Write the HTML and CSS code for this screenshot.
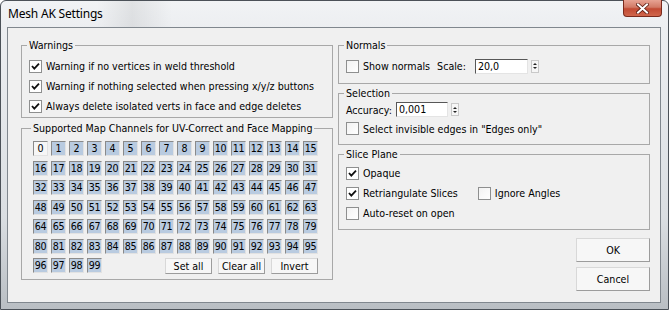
FILE: index.html
```html
<!DOCTYPE html>
<html lang="en">
<head>
    <meta charset="UTF-8">
    <title>Mesh AK Settings</title>
    <link rel="stylesheet" href="styles.css">
</head>
<body>
<div class="window">
  <div class="titlebar">
    <span class="title">Mesh AK Settings</span>
    <span class="close">
      <svg width="13" height="11" viewBox="0 0 13 11">
        <path d="M2 1.5 L11 9.5 M11 1.5 L2 9.5" stroke="#5a1a10" stroke-width="3.6" stroke-linecap="square"/>
        <path d="M2 1.5 L11 9.5 M11 1.5 L2 9.5" stroke="#fff" stroke-width="2" stroke-linecap="square"/>
      </svg>
    </span>
  </div>

  <div class="client">
    <div class="col">
      <fieldset class="group warnings">
        <legend>Warnings</legend>
        <div class="row"><span class="cb on"></span>Warning if no vertices in weld threshold</div>
        <div class="row"><span class="cb on"></span>Warning if nothing selected when pressing x/y/z buttons</div>
        <div class="row"><span class="cb on"></span>Always delete isolated verts in face and edge deletes</div>
      </fieldset>

      <fieldset class="group channels">
        <legend>Supported Map Channels for UV-Correct and Face Mapping</legend>
        <div class="grid">
          <span class="ch">0</span><span class="ch on">1</span><span class="ch on">2</span><span class="ch on">3</span>
          <span class="ch on">4</span><span class="ch on">5</span><span class="ch on">6</span><span class="ch on">7</span>
          <span class="ch on">8</span><span class="ch on">9</span><span class="ch on">10</span><span class="ch on">11</span>
          <span class="ch on">12</span><span class="ch on">13</span><span class="ch on">14</span><span class="ch on">15</span>
          <span class="ch on">16</span><span class="ch on">17</span><span class="ch on">18</span><span class="ch on">19</span>
          <span class="ch on">20</span><span class="ch on">21</span><span class="ch on">22</span><span class="ch on">23</span>
          <span class="ch on">24</span><span class="ch on">25</span><span class="ch on">26</span><span class="ch on">27</span>
          <span class="ch on">28</span><span class="ch on">29</span><span class="ch on">30</span><span class="ch on">31</span>
          <span class="ch on">32</span><span class="ch on">33</span><span class="ch on">34</span><span class="ch on">35</span>
          <span class="ch on">36</span><span class="ch on">37</span><span class="ch on">38</span><span class="ch on">39</span>
          <span class="ch on">40</span><span class="ch on">41</span><span class="ch on">42</span><span class="ch on">43</span>
          <span class="ch on">44</span><span class="ch on">45</span><span class="ch on">46</span><span class="ch on">47</span>
          <span class="ch on">48</span><span class="ch on">49</span><span class="ch on">50</span><span class="ch on">51</span>
          <span class="ch on">52</span><span class="ch on">53</span><span class="ch on">54</span><span class="ch on">55</span>
          <span class="ch on">56</span><span class="ch on">57</span><span class="ch on">58</span><span class="ch on">59</span>
          <span class="ch on">60</span><span class="ch on">61</span><span class="ch on">62</span><span class="ch on">63</span>
          <span class="ch on">64</span><span class="ch on">65</span><span class="ch on">66</span><span class="ch on">67</span>
          <span class="ch on">68</span><span class="ch on">69</span><span class="ch on">70</span><span class="ch on">71</span>
          <span class="ch on">72</span><span class="ch on">73</span><span class="ch on">74</span><span class="ch on">75</span>
          <span class="ch on">76</span><span class="ch on">77</span><span class="ch on">78</span><span class="ch on">79</span>
          <span class="ch on">80</span><span class="ch on">81</span><span class="ch on">82</span><span class="ch on">83</span>
          <span class="ch on">84</span><span class="ch on">85</span><span class="ch on">86</span><span class="ch on">87</span>
          <span class="ch on">88</span><span class="ch on">89</span><span class="ch on">90</span><span class="ch on">91</span>
          <span class="ch on">92</span><span class="ch on">93</span><span class="ch on">94</span><span class="ch on">95</span>
          <span class="ch on">96</span><span class="ch on">97</span><span class="ch on">98</span><span class="ch on">99</span>
          <div class="tools">
            <button class="btn small">Set all</button>
            <button class="btn small">Clear all</button>
            <button class="btn small">Invert</button>
          </div>
        </div>
      </fieldset>
    </div>

    <div class="col">
      <fieldset class="group normals">
        <legend>Normals</legend>
        <div class="row">
          <span class="cb"></span>Show normals
          <span class="lbl-scale">Scale:</span>
          <span class="num scale">20,0</span><span class="spin"><i class="up"></i><i class="dn"></i></span>
        </div>
      </fieldset>

      <fieldset class="group selection">
        <legend>Selection</legend>
        <div class="row tight">
          Accuracy:
          <span class="num acc">0,001</span><span class="spin"><i class="up"></i><i class="dn"></i></span>
        </div>
        <div class="row tight"><span class="cb"></span>Select invisible edges in "Edges only"</div>
      </fieldset>

      <fieldset class="group slice">
        <legend>Slice Plane</legend>
        <div class="row"><span class="cb on"></span>Opaque</div>
        <div class="row"><span class="cb on"></span><span class="retri">Retriangulate Slices</span><span class="cb"></span>Ignore Angles</div>
        <div class="row"><span class="cb"></span>Auto-reset on open</div>
      </fieldset>

      <div class="actions">
        <button class="btn big">OK</button>
        <button class="btn big">Cancel</button>
      </div>
    </div>
  </div>
</div>
</body>
</html>
```

FILE: styles.css
```css
body {
    margin: 0;
    font-family: "DejaVu Sans Condensed", "DejaVu Sans", sans-serif;
    font-stretch: condensed;
    font-size: 10.6px;
    color: #000;
    background: #fff;
}

.window {
    width: 669px;
    height: 310px;
    box-sizing: border-box;
    padding: 0 7px 6px 6px;
    border: 1px solid #4b5158;
    border-radius: 6px 6px 0 0;
    background: linear-gradient(to bottom, #f1f3f5 0, #eceef1 28px, #dadee2 70%, #b9bec3 100%);
    display: flex;
    flex-direction: column;
}

.titlebar {
    height: 26px;
    display: flex;
    align-items: flex-start;
    background: linear-gradient(to right, rgba(0,0,0,0) 90px, rgba(0,0,0,0.07) 125px, rgba(0,0,0,0) 165px);
}

.title {
    font-family: "Noto Sans", "Open Sans", sans-serif;
    font-stretch: normal;
    font-size: 12px;
    line-height: 26px;
    padding-left: 1px;
    letter-spacing: -0.2px;
    color: #000;
}

.close {
    margin: -1px -1px 0 auto;
    width: 39px;
    height: 17px;
    box-sizing: border-box;
    border: 1px solid #7a2a1c;
    border-top: none;
    border-radius: 0 0 4px 4px;
    background: linear-gradient(to bottom, #e7a393 0, #d27a66 45%, #c24a33 55%, #d0664c 100%);
    display: flex;
    align-items: center;
    justify-content: center;
}

.client {
    flex: 1;
    border: 1px solid #80878e;
    background: #f0f0f0;
    display: flex;
    gap: 5px;
    padding: 10px 10px 0 13px;
}

.col {
    width: 312px;
    display: flex;
    flex-direction: column;
}

.group {
    margin: 0;
    min-width: 0;
    border: 1px solid #a8a8a8;
    padding: 0 0 0 7px;
}

.group legend {
    padding: 0 2px;
    margin-left: -2px;
    line-height: 14px;
}

.row {
    height: 20px;
    display: flex;
    align-items: center;
    white-space: nowrap;
}

.row.tight {
    height: 19px;
}

.cb {
    width: 13px;
    height: 13px;
    box-sizing: border-box;
    border: 1px solid #8e8f8f;
    background: linear-gradient(135deg, #f2f2f2, #ffffff);
    margin-right: 4px;
    flex: none;
}

.cb.on {
    background: #fff url("data:image/svg+xml,%3Csvg xmlns='http://www.w3.org/2000/svg' width='11' height='11'%3E%3Cpath d='M2 5 L4.3 7.6 L9 2.6' fill='none' stroke='%23111' stroke-width='1.8'/%3E%3C/svg%3E") no-repeat center;
}

/* warnings */
.warnings {
    padding-top: 4px;
    padding-bottom: 1px;
}

/* map channels */
.channels {
    margin-top: 3px;
    padding: 6px 0 6px 11px;
}

.grid {
    display: grid;
    grid-template-columns: repeat(16, 15px);
    grid-auto-rows: 15px;
    column-gap: 3px;
    row-gap: 4.5px;
}

.ch {
    box-sizing: border-box;
    border: 1px solid;
    border-color: #8a8a8a #e2e2e2 #e2e2e2 #8a8a8a;
    background: #f6f6f6;
    text-align: center;
    line-height: 13px;
    letter-spacing: -0.3px;
}

.ch.on {
    background: #b9cbe0;
}

.tools {
    grid-column: 5 / 17;
    display: flex;
    justify-content: flex-end;
    align-items: center;
    gap: 6px;
}

.btn {
    font: inherit;
    color: #000;
    padding: 0;
    box-sizing: border-box;
    border: 1px solid;
    border-color: #d8d8d8 #9c9c9c #9c9c9c #d8d8d8;
    background: #f7f7f7;
}

.btn.small {
    width: 47px;
    height: 16px;
    line-height: 14px;
}

.btn.big {
    width: 74px;
    height: 24px;
}

/* normals */
.normals {
    padding-top: 4px;
    padding-bottom: 7px;
}

.lbl-scale {
    margin-left: 7px;
    margin-right: 9px;
}

.num {
    height: 15px;
    box-sizing: border-box;
    border: 1px solid;
    border-color: #575757 #e4e4e4 #e4e4e4 #575757;
    background: #fff;
    padding-left: 2px;
    line-height: 13px;
}

.num.scale {
    width: 53px;
}

.num.acc {
    width: 52px;
    margin-left: 4px;
}

.spin {
    width: 8px;
    height: 13px;
    box-sizing: border-box;
    border: 1px solid #c9c9c9;
    background: #f6f6f6;
    margin-left: 3px;
    display: flex;
    flex-direction: column;
    align-items: center;
    justify-content: center;
    gap: 2px;
}

.spin i {
    width: 0;
    height: 0;
    border-left: 2px solid transparent;
    border-right: 2px solid transparent;
}

.spin .up {
    border-bottom: 2px solid #222;
}

.spin .dn {
    border-top: 2px solid #222;
}

/* selection */
.selection {
    margin-top: 2px;
    padding-top: 0;
    padding-bottom: 6px;
}

/* slice plane */
.slice {
    margin-top: 2px;
    padding-top: 2px;
    padding-bottom: 6px;
}

.retri {
    margin-right: 20px;
}

.actions {
    margin-top: 8px;
    display: flex;
    flex-direction: column;
    align-items: flex-end;
    gap: 5px;
}
```
